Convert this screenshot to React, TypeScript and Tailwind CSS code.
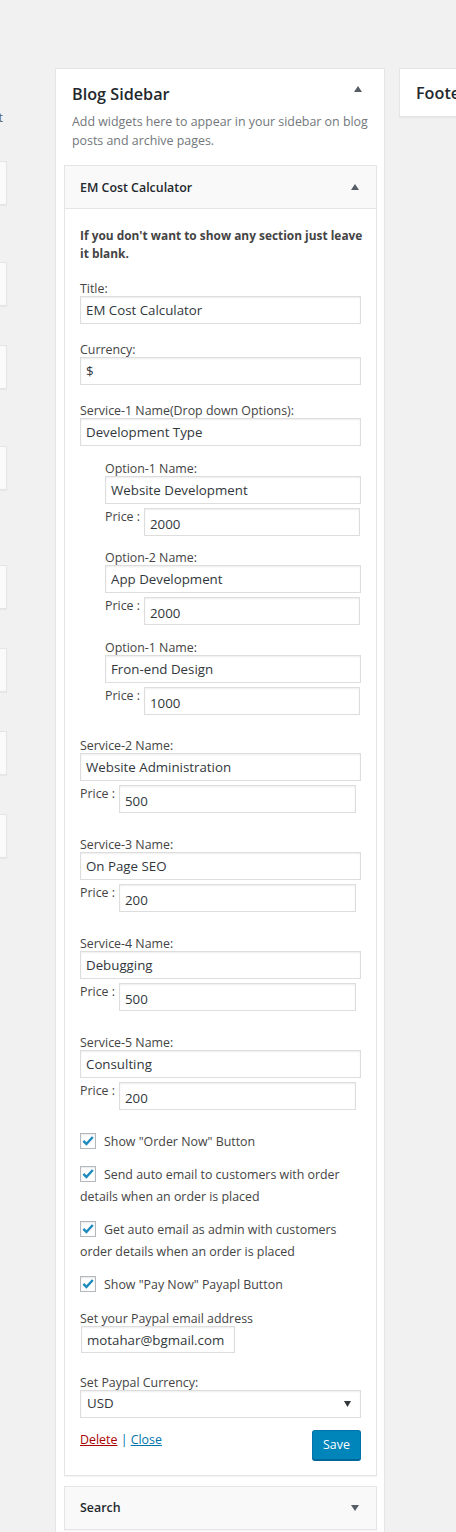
import React from "react";

const UpArrow = () => (
  <svg width="8" height="6" viewBox="0 0 8 6" className="block">
    <path d="M0 6 L4 0 L8 6 Z" fill="#555d66" />
  </svg>
);

const DownArrow = () => (
  <svg width="8" height="6" viewBox="0 0 8 6" className="block">
    <path d="M0 0 L8 0 L4 6 Z" fill="#555d66" />
  </svg>
);

function TextInput({ value, className }: { value: string; className: string }) {
  return (
    <input
      readOnly
      value={value}
      className={`block border border-[#ddd] bg-white shadow-[inset_0_1px_2px_rgba(0,0,0,0.07)] px-[5px] text-[13.3px] text-[#32373c] outline-none ${className}`}
    />
  );
}

function Field({ label, value, className }: { label: string; value: string; className: string }) {
  return (
    <div className={className}>
      <div className="leading-[16px] pt-[1px] h-[16px]">{label}</div>
      <TextInput value={value} className="w-full h-[28px]" />
    </div>
  );
}

function PriceRow({ value, inputClass }: { value: string; inputClass: string }) {
  return (
    <div className="flex items-start mt-[4px]">
      <div className="w-[39px] shrink-0 leading-[16px] pt-[1px]">Price :</div>
      <TextInput value={value} className={`h-[28px] pt-[3px] ${inputClass}`} />
    </div>
  );
}

function Checkbox() {
  return (
    <span className="inline-block w-[16px] h-[16px] border border-[#b4b9be] bg-white shadow-[inset_0_1px_2px_rgba(0,0,0,0.1)] align-[-3px] mr-[8px] relative">
      <svg width="14" height="14" viewBox="0 0 14 14" className="absolute left-0 top-0">
        <path d="M2.4 6.9 L5.4 10 L11.8 3" stroke="#1e8cbe" strokeWidth="2.5" fill="none" strokeLinecap="butt" />
      </svg>
    </span>
  );
}

function LeftBox({ className }: { className: string }) {
  return (
    <div className={`h-[44px] w-full bg-[#fafafa] border border-[#e5e5e5] shadow-[0_1px_1px_rgba(0,0,0,0.04)] ${className}`} />
  );
}

export default function App() {
  return (
    <div className="h-[1532px] w-full overflow-hidden bg-[#f1f1f1] font-['Open_Sans',sans-serif] text-[12.4px] text-[#444]">
      <div className="flex items-start pt-[68px]">
        {/* Left column (available widgets, mostly off-screen) */}
        <div className="w-[200px] shrink-0 ml-[-193px] flex flex-col">
          <div className="mt-[41px] leading-[18px] text-right pr-[4px] text-[#555d66] whitespace-nowrap">
            To deactivate a widget
          </div>
          <LeftBox className="mt-[34px]" />
          <LeftBox className="mt-[57px]" />
          <LeftBox className="mt-[39px]" />
          <LeftBox className="mt-[57px]" />
          <LeftBox className="mt-[75px]" />
          <LeftBox className="mt-[39px]" />
          <LeftBox className="mt-[39px]" />
          <LeftBox className="mt-[39px]" />
        </div>

        {/* Blog Sidebar panel */}
        <div className="ml-[48px] w-[330px] shrink-0 bg-white border border-[#e5e5e5] shadow-[0_1px_1px_rgba(0,0,0,0.04)] pb-[40px]">
          <div className="flex items-start justify-between pl-[16px] pr-[22px] pt-[13px]">
            <h2 className="text-[16.2px] leading-[24px] font-semibold text-[#23282d]">Blog Sidebar</h2>
            <div className="mt-[4px]">
              <UpArrow />
            </div>
          </div>
          <p className="pl-[16px] mt-[6px] leading-[19px] text-[#72777c]">
            Add widgets here to appear in your sidebar on blog
            <br />
            posts and archive pages.
          </p>

          {/* EM Cost Calculator widget */}
          <div className="ml-[8px] mr-[7px] mt-[15px] border border-[#e5e5e5] bg-white shadow-[0_1px_1px_rgba(0,0,0,0.04)]">
            <div className="h-[43px] bg-[#f9f9f9] border-b border-[#e5e5e5] flex items-center justify-between pl-[15px] pr-[17px]">
              <h3 className="font-semibold text-[#23282d] leading-[18px] pt-[2px]">EM Cost Calculator</h3>
              <UpArrow />
            </div>
            <div className="px-[15px] pt-[17px] pb-[15px]">
              <p className="font-bold leading-[18px] text-[11.9px] whitespace-nowrap">
                If you don't want to show any section just leave
                <br />
                it blank.
              </p>

              <Field label="Title:" value="EM Cost Calculator" className="mt-[18px]" />
              <Field label="Currency:" value="$" className="mt-[17px]" />
              <Field label="Service-1 Name(Drop down Options):" value="Development Type" className="mt-[17px]" />

              <div className="pl-[25px]">
                <Field label="Option-1 Name:" value="Website Development" className="mt-[14px]" />
                <PriceRow value="2000" inputClass="w-[216px]" />
                <Field label="Option-2 Name:" value="App Development" className="mt-[13px]" />
                <PriceRow value="2000" inputClass="w-[216px]" />
                <Field label="Option-1 Name:" value="Fron-end Design" className="mt-[14px]" />
                <PriceRow value="1000" inputClass="w-[216px]" />
              </div>

              <Field label="Service-2 Name:" value="Website Administration" className="mt-[22px]" />
              <PriceRow value="500" inputClass="w-[237px]" />
              <Field label="Service-3 Name:" value="On Page SEO" className="mt-[23px]" />
              <PriceRow value="200" inputClass="w-[237px]" />
              <Field label="Service-4 Name:" value="Debugging" className="mt-[23px]" />
              <PriceRow value="500" inputClass="w-[237px]" />
              <Field label="Service-5 Name:" value="Consulting" className="mt-[23px]" />
              <PriceRow value="200" inputClass="w-[237px]" />

              <p className="mt-[21px] leading-[22px]">
                <Checkbox />
                Show "Order Now" Button
              </p>
              <p className="mt-[11px] leading-[22px]">
                <Checkbox />
                Send auto email to customers with order
                <br />
                details when an order is placed
              </p>
              <p className="mt-[11px] leading-[22px]">
                <Checkbox />
                Get auto email as admin with customers
                <br />
                order details when an order is placed
              </p>
              <p className="mt-[11px] leading-[22px]">
                <Checkbox />
                Show "Pay Now" Payapl Button
              </p>

              <div className="mt-[14px] leading-[16px] pt-[1px] h-[16px]">Set your Paypal email address</div>
              <TextInput value="motahar@bgmail.com" className="ml-[1px] w-[154px] h-[27px]" />

              <div className="mt-[21px] leading-[16px] pt-[1px] h-[16px]">Set Paypal Currency:</div>
              <div className="h-[28px] w-full border border-[#ddd] bg-white shadow-[inset_0_1px_2px_rgba(0,0,0,0.07)] flex items-center justify-between pl-[6px] pr-[9px] text-[13.3px] text-[#32373c]">
                <span>USD</span>
                <svg width="7" height="6" viewBox="0 0 7 6" className="block">
                  <path d="M0 0 L7 0 L3.5 6 Z" fill="#32373c" />
                </svg>
              </div>

              <div className="mt-[12px] flex items-start justify-between">
                <div className="leading-[20px]">
                  <a className="text-[#a00] underline">Delete</a>
                  <span className="text-[#0073aa]"> | </span>
                  <a className="text-[#0073aa] underline">Close</a>
                </div>
                <button className="h-[30px] w-[49px] rounded-[3px] bg-[#0085ba] border border-[#0073aa] border-b-[#006799] shadow-[0_1px_0_#006799] text-white text-[12.4px] leading-[26px]">
                  Save
                </button>
              </div>
            </div>
          </div>

          {/* Search widget */}
          <div className="ml-[8px] mr-[7px] mt-[10px] h-[44px] border border-[#e5e5e5] bg-[#f9f9f9] flex items-center justify-between pl-[15px] pr-[17px] shadow-[0_1px_1px_rgba(0,0,0,0.04)]">
            <h3 className="font-semibold text-[#23282d] leading-[18px]">Search</h3>
            <DownArrow />
          </div>
        </div>

        {/* Footer panel */}
        <div className="ml-[14px] w-[300px] shrink-0 h-[49px] bg-white border border-[#e5e5e5] shadow-[0_1px_1px_rgba(0,0,0,0.04)] flex items-center pl-[16px]">
          <h2 className="text-[16.2px] leading-[24px] font-semibold text-[#23282d] whitespace-nowrap">Footer</h2>
        </div>
      </div>
    </div>
  );
}
